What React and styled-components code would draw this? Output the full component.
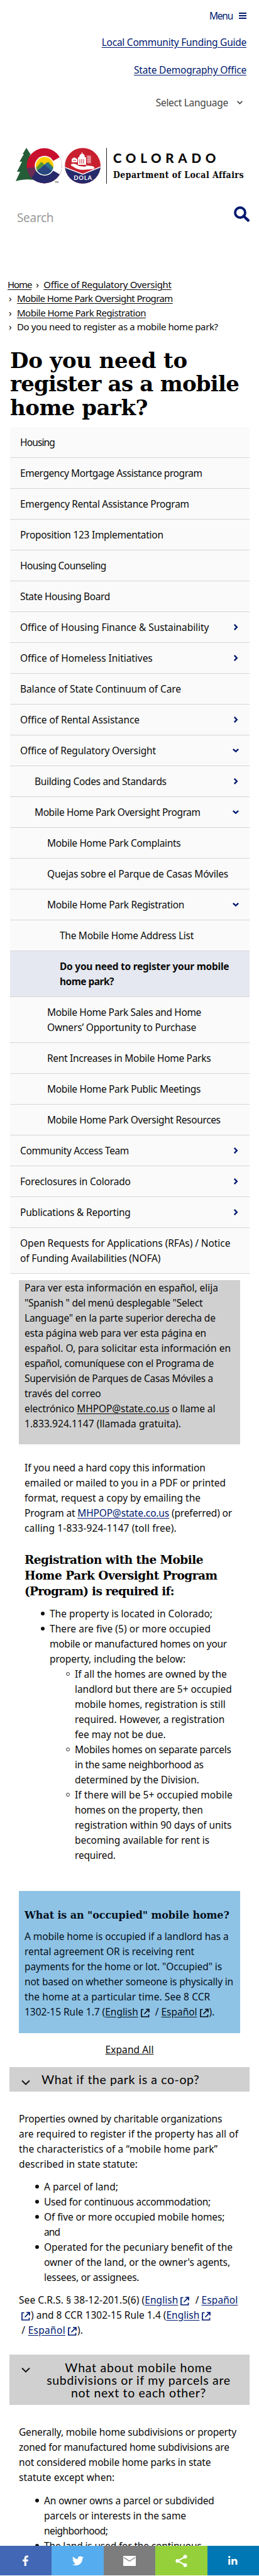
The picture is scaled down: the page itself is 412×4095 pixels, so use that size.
import React, { useLayoutEffect, useRef, useState } from "react";
import styled, { createGlobalStyle, css } from "styled-components";

const SANS = '"Noto Sans", "Open Sans", sans-serif';
const SLAB = '"DejaVu Serif", "Liberation Serif", serif';
const NAVY = "#001970";

const GlobalStyle = createGlobalStyle`
  body {
    margin: 0;
    background: #fff;
    color: #0a0a0a;
    font-family: ${SANS};
    font-size: 15.5px;
    line-height: 24px;
  }
  h1, h2, h3, p, ul { margin: 0; padding: 0; }
  a { color: inherit; }
`;

/* ---------- text fitting ---------- */

const Fitted = styled.span`
  display: inline-block;
  vertical-align: top;
  white-space: pre;
`;

/* Tracks a run of text so that it sets to the given measure. */
function Fit({ w, children }) {
  const ref = useRef(null);
  const [spacing, setSpacing] = useState(0);
  useLayoutEffect(() => {
    const el = ref.current;
    setSpacing((w - el.getBoundingClientRect().width) / el.textContent.length);
  }, [w]);
  return (
    <Fitted ref={ref} style={{ letterSpacing: `${spacing}px` }}>
      {children}
    </Fitted>
  );
}

const LineBox = styled.span`
  display: block;
`;

function Lines({ of }) {
  return of.map(([content, w], i) => (
    <LineBox key={i}>
      <Fit w={w}>{content}</Fit>
    </LineBox>
  ));
}

/* ---------- page and header ---------- */

const Page = styled.div`
  position: relative;
  width: 412px;
  height: 4095px;
  overflow: hidden;
`;

const TopMenu = styled.div`
  display: flex;
  flex-direction: column;
  align-items: flex-end;
  padding: 13px 20px 0 0;
  color: ${NAVY};
`;

const MenuButton = styled.div`
  display: flex;
  gap: 10px;
  margin-bottom: 18px;
`;

const Bars = styled.span`
  width: 12px;
  height: 6px;
  margin-top: 7px;
  border-top: 2px solid ${NAVY};
  border-bottom: 2px solid ${NAVY};
  background: linear-gradient(${NAVY}, ${NAVY}) center / 100% 2px no-repeat;
`;

const TopLink = styled.a`
  text-decoration: underline;
  text-underline-offset: 2px;
  margin-bottom: ${(p) => p.$after}px;
`;

const LanguageSelect = styled.div`
  display: flex;
  align-items: center;
  gap: 14px;
  padding-right: 6px;
  color: #444;
`;

const Brand = styled.div`
  display: flex;
  height: 57px;
  margin: 60px 0 0 25px;
`;

const BrandText = styled.div`
  display: flex;
  flex-direction: column;
  margin-left: 9px;
  padding-left: 10px;
  border-left: 1px solid #222;
`;

const StateName = styled.div`
  height: 28px;
  padding-top: 4px;
  font: 900 20.5px/25px Lato, sans-serif;
`;

const Department = styled.div`
  font: bold 14px/24px ${SLAB};
  font-stretch: condensed;
  margin-top: -1px;
`;

const SearchBar = styled.div`
  display: flex;
  justify-content: space-between;
  align-items: flex-start;
  height: 31px;
  margin: 36px 15px 0 27px;
`;

const Placeholder = styled.div`
  padding-top: 5px;
  font-size: 19px;
  line-height: 26px;
  color: #999;
`;

/* ---------- breadcrumb and title ---------- */

const Breadcrumb = styled.div`
  margin: 82px 0 0 12px;
  font-size: 15px;
  line-height: 22.4px;
`;

const Crumb = styled.div`
  display: flex;
  height: 22.4px;
  text-underline-offset: 2px;
`;

const Sep = styled.span`
  width: ${(p) => (p.$wide ? 19 : 15)}px;
  padding-left: ${(p) => (p.$wide ? 7 : 2)}px;
  box-sizing: border-box;
`;

const Title = styled.h1`
  margin: 24px 0 0 16px;
  font: bold 34px/37.5px ${SLAB};
  color: #000;
`;

/* ---------- side navigation ---------- */

const Nav = styled.nav`
  margin: 12px 15px 0 16px;
`;

const NavRow = styled.div`
  display: flex;
  justify-content: space-between;
  align-items: center;
  padding: 12px 17px 12px ${(p) => [16, 39, 59, 79][p.$level]}px;
  border-bottom: 1px solid #d6d6d6;
  background: #fafafa;
  ${(p) =>
    p.$active &&
    css`
      background: #e5e8f0;
      font-weight: bold;
    `}
`;

/* ---------- article ---------- */

const Panel = styled.div`
  width: 352px;
  box-sizing: border-box;
  margin: ${(p) => p.$top}px 0 0 30px;
  padding: ${(p) => p.$pad};
  background: ${(p) => p.$fill};
  color: ${(p) => p.$ink || "#0a0a0a"};
`;

const Paragraph = styled.p`
  margin: ${(p) => p.$top}px 0 0 ${(p) => p.$left}px;
`;

const SectionTitle = styled.h2`
  margin: 26px 0 11px 39px;
  font: bold 18.5px/25px ${SLAB};
  color: #000;
`;

const PanelTitle = styled.h3`
  margin-bottom: 10px;
  font: bold 16px/22px ${SLAB};
`;

const List = styled.ul`
  margin: ${(p) => p.$top || 0}px 0 0 ${(p) => p.$left}px;
  list-style: none;
`;

const Item = styled.li`
  &::before {
    content: "";
    float: left;
    box-sizing: border-box;
    width: 6px;
    height: 6px;
    margin: 9px 0 0 -14px;
    border-radius: 50%;
    ${(p) =>
      p.$hollow
        ? css`border: 1px solid #333;`
        : css`background: #111;`}
  }
`;

const TextLink = styled.a`
  color: ${(p) => (p.$plain ? "inherit" : NAVY)};
  text-decoration: underline;
  text-underline-offset: 2px;
`;

const ExpandAll = styled.div`
  margin-top: 14px;
  text-align: center;
`;

const AccordionHeader = styled.div`
  display: flex;
  box-sizing: border-box;
  height: ${(p) => p.$h}px;
  margin: ${(p) => p.$top}px 15px 0;
  padding: ${(p) => p.$padTop}px 22px 0 19px;
  background: #d0d0d0;
  color: #111;
`;

const AccordionChevron = styled.span`
  width: 32px;
  padding-top: ${(p) => p.$drop}px;
  line-height: 0;
`;

const AccordionTitle = styled.h3`
  flex: ${(p) => (p.$center ? "1" : "none")};
  text-align: ${(p) => (p.$center ? "center" : "left")};
  font: 400 19.5px/20px Lato, sans-serif;
  color: #000;
`;

const IconTint = styled.span`
  color: ${(p) => (p.$plain ? "inherit" : NAVY)};
`;

const ExternalSvg = styled.svg`
  width: 14px;
  height: 14px;
  margin: 0 1px 0 4px;
  vertical-align: -3px;
`;

/* ---------- share bar ---------- */

const ShareBar = styled.div`
  position: absolute;
  left: 0;
  bottom: 1px;
  display: flex;
  width: 100%;
  height: 47px;
`;

const ShareButton = styled.div`
  flex: 1;
  display: flex;
  align-items: center;
  justify-content: center;
  background: ${(p) => p.$fill};
`;

/* ---------- icons ---------- */

const External = ({ plain }) => (
  <IconTint $plain={plain}>
    <ExternalSvg viewBox="0 0 14 14" fill="none" stroke="currentColor" strokeWidth="1.7">
      <path d="M4.5 1.5H1v11.5h11.5V9.5M8 1h5v5M12.8 1.2L5.5 8.5" />
    </ExternalSvg>
  </IconTint>
);

const Chevron = ({ down }) => (
  <svg width="10" height="10" viewBox="0 0 10 10" fill="none" stroke={NAVY} strokeWidth="2.4">
    <path d={down ? "M0.8 2.8L5 6.6L9.2 2.8" : "M2.8 0.8L6.8 5L2.8 9.2"} />
  </svg>
);

const ThinChevron = ({ w, stroke, sw }) => (
  <svg width={w} height={w * 0.64} viewBox="0 0 14 9" fill="none" stroke={stroke} strokeWidth={sw}>
    <path d="M1 1.5L7 7.5L13 1.5" />
  </svg>
);

const SearchIcon = () => (
  <svg width="25" height="25" viewBox="0 0 25 25" fill="none" stroke={NAVY}>
    <circle cx="10" cy="10" r="8" strokeWidth="3.8" />
    <path d="M15.5 15.5L22.8 22.4" strokeWidth="4.2" strokeLinecap="round" />
  </svg>
);

const Logo = () => (
  <svg width="135" height="57" viewBox="0 0 135 57">
    <path d="M17 0L24 11L22 12L28 22L26 23L34 36L34 53C24 49 12 50 0 53L7 38L2 38L10 22L6 22L13 10L11 10Z" fill="#245d38" />
    <clipPath id="c"><circle cx="45.5" cy="28.5" r="28" /></clipPath>
    <g clipPath="url(#c)">
      <rect x="17" width="58" height="57" fill="#c8102e" />
      <path d="M17 45L45 28.5L75 28.5V57H17Z" fill="#262a6b" />
      <path d="M17 32L37 30L24 50H17Z" fill="#6a2c55" />
      <path d="M46 28.5L75 12V45Z" fill="#fff" />
    </g>
    <circle cx="46" cy="28.5" r="15.7" fill="#fff" />
    <clipPath id="m"><circle cx="46" cy="28.5" r="14" /></clipPath>
    <g clipPath="url(#m)">
      <rect x="31" y="13" width="30" height="31" fill="#ffcd00" />
      <path d="M31 33L41 22L47 28L52 22L62 33V44H31Z" fill="#5b9a32" />
      <path d="M38 33L50 23L62 35V44H31L35 34Z" fill="#2d6f96" />
      <path d="M30 41L46 27L62 41V46H30Z" fill="#28467f" />
    </g>
    <text x="62" y="56" fontSize="4" fontFamily="Lato, sans-serif">TM</text>
    <clipPath id="d"><circle cx="106.6" cy="28.5" r="28.3" /></clipPath>
    <g clipPath="url(#d)">
      <rect x="78" width="58" height="57" fill="#c8202f" />
      <path d="M78 31L106.6 42L136 30V57H78Z" fill="#262a6b" />
      <path d="M78 31L106.6 42L136 30" fill="none" stroke="#fff" strokeWidth="1.6" />
    </g>
    <path d="M88 26C94 24 97 27 101 29L111 30L112 28L122 29C127 31 126 34 121 34L106 35C98 35 93 31 88 28Z" fill="#fff" />
    <path d="M89 23V18L93 15L98 18V23ZM99 27V15H101C101 11 104 10 105 9V7H106V9C109 10 110 12 110 15H112V27Z" fill="#fff" />
    <path d="M102 18V25M105 18V25M108 18V25M91 20H96" stroke="#c8202f" strokeWidth="1" />
    <path d="M112.5 13H119V25M113 16H119M113 19H119M113 22H119M115 13V25M117 13V25" stroke="#fff" strokeWidth="0.7" fill="none" />
    <text x="107" y="51" fontSize="9.5" fontWeight="bold" textAnchor="middle" letterSpacing="0.8" fill="#fff" fontFamily="Lato, sans-serif">DOLA</text>
  </svg>
);

const FacebookIcon = () => (
  <svg width="20" height="20" viewBox="0 0 20 20" fill="#fff">
    <path d="M7.7 18V10.8H5V7.8H7.7V6C7.7 3 9.2 1.5 11.8 1.5H14V4.6H12.3C11.2 4.6 10.9 5 10.9 6V7.8H14L13.6 10.8H10.9V18Z" />
  </svg>
);

const TwitterIcon = () => (
  <svg width="18" height="18" viewBox="0 0 24 24" fill="#fff">
    <path d="M23.95 4.57a10 10 0 0 1-2.82.77 4.96 4.96 0 0 0 2.16-2.72c-.95.55-2 .95-3.13 1.18a4.92 4.92 0 0 0-8.38 4.48C7.69 8.1 4.07 6.13 1.64 3.16a4.92 4.92 0 0 0 1.52 6.57 4.9 4.9 0 0 1-2.23-.61v.06a4.92 4.92 0 0 0 3.95 4.83 5 5 0 0 1-2.21.08 4.94 4.94 0 0 0 4.6 3.42A9.87 9.87 0 0 1 0 19.54a13.99 13.99 0 0 0 7.55 2.21c9.05 0 14-7.5 14-13.98 0-.21 0-.42-.02-.63a9.94 9.94 0 0 0 2.46-2.55z" />
  </svg>
);

const MailIcon = () => (
  <svg width="20" height="16" viewBox="0 0 20 16">
    <path d="M0 0H20V16H0Z" fill="#fff" />
    <path d="M1 2.5L10 8.5L19 2.5" fill="none" stroke="#7d7d7d" strokeWidth="1.3" />
  </svg>
);

const ShareIcon = () => (
  <svg width="19" height="20" viewBox="0 0 19 20" fill="#fff">
    <path d="M15.5 3.5L3.5 10L15.5 16.5" fill="none" stroke="#fff" strokeWidth="2" />
    <circle cx="15.5" cy="3.3" r="3" />
    <circle cx="3.3" cy="10" r="3" />
    <circle cx="15.5" cy="16.7" r="3" />
  </svg>
);

const LinkedinIcon = () => (
  <svg width="15" height="15" viewBox="0 0 15 15" fill="#fff">
    <circle cx="1.8" cy="1.8" r="1.7" />
    <path d="M0.3 5H3.3V14H0.3ZM5.3 5H8.2V6.3C9.6 4 14.6 4 14.6 8.8V14H11.6V9.4C11.6 6.4 8.3 6.7 8.3 9.4V14H5.3Z" />
  </svg>
);

/* ---------- content ---------- */

const NAV = [
  [0, null, ["Housing", 55]],
  [0, null, ["Emergency Mortgage Assistance program", 289.7]],
  [0, null, ["Emergency Rental Assistance Program", 268.7]],
  [0, null, ["Proposition 123 Implementation", 227.7]],
  [0, null, ["Housing Counseling", 136.7]],
  [0, null, ["State Housing Board", 143]],
  [0, "right", ["Office of Housing Finance & Sustainability", 300.3]],
  [0, "right", ["Office of Homeless Initiatives", 210.7]],
  [0, null, ["Balance of State Continuum of Care", 256]],
  [0, "right", ["Office of Rental Assistance", 190]],
  [0, "down", ["Office of Regulatory Oversight", 216]],
  [1, "right", ["Building Codes and Standards", 209.7]],
  [1, "down", ["Mobile Home Park Oversight Program", 263.7]],
  [2, null, ["Mobile Home Park Complaints", 212.3]],
  [2, null, ["Quejas sobre el Parque de Casas Móviles", 288]],
  [2, "down", ["Mobile Home Park Registration", 218]],
  [3, null, ["The Mobile Home Address List", 213]],
  [3, "active", ["Do you need to register your mobile", 269.3], ["home park?", 86]],
  [2, null, ["Mobile Home Park Sales and Home", 245], ["Owners’ Opportunity to Purchase", 237]],
  [2, null, ["Rent Increases in Mobile Home Parks", 260.3]],
  [2, null, ["Mobile Home Park Public Meetings", 244]],
  [2, null, ["Mobile Home Park Oversight Resources", 275.7]],
  [0, "right", ["Community Access Team", 173]],
  [0, "right", ["Foreclosures in Colorado", 175.7]],
  [0, "right", ["Publications & Reporting", 175.7]],
  [0, null, ["Open Requests for Applications (RFAs) / Notice", 334.3], ["of Funding Availabilities (NOFA)", 223.3]],
];

const ExternalLink = ({ plain, children }) => (
  <>
    <TextLink $plain={plain}>{children}</TextLink>
    <External plain={plain} />
  </>
);

export default function App() {
  return (
    <Page>
      <GlobalStyle />
      <header>
        <TopMenu>
          <MenuButton><Fit w={37}>Menu</Fit><Bars /></MenuButton>
          <TopLink $after={20}><Fit w={230.3}><u>Local Community Funding Guide</u></Fit></TopLink>
          <TopLink $after={28}><Fit w={179}><u>State Demography Office</u></Fit></TopLink>
          <LanguageSelect>
            <Fit w={115.3}>Select Language</Fit>
            <ThinChevron w={9} stroke="#444" sw={2.6} />
          </LanguageSelect>
        </TopMenu>
        <Brand>
          <Logo />
          <BrandText>
            <StateName><Fit w={170}>COLORADO</Fit></StateName>
            <Department><Fit w={207.7}>Department of Local Affairs</Fit></Department>
          </BrandText>
        </Brand>
        <SearchBar>
          <Placeholder><Fit w={58.3}>Search</Fit></Placeholder>
          <SearchIcon />
        </SearchBar>
      </header>

      <Breadcrumb>
        <Crumb><Fit w={38.3}><u>Home</u></Fit><Sep $wide>›</Sep><Fit w={203.3}><u>Office of Regulatory Oversight</u></Fit></Crumb>
        <Crumb><Sep>›</Sep><Fit w={247.7}><u>Mobile Home Park Oversight Program</u></Fit></Crumb>
        <Crumb><Sep>›</Sep><Fit w={205}><u>Mobile Home Park Registration</u></Fit></Crumb>
        <Crumb><Sep>›</Sep><Fit w={319.7}>Do you need to register as a mobile home park?</Fit></Crumb>
      </Breadcrumb>

      <Title>
        <Lines of={[["Do you need to", 282], ["register as a mobile", 364], ["home park?", 219]]} />
      </Title>

      <Nav>
        {NAV.map(([level, mark, ...lines]) => (
          <NavRow key={lines[0][0]} $level={level} $active={mark === "active"}>
            <div><Lines of={lines} /></div>
            {(mark === "right" || mark === "down") && <Chevron down={mark === "down"} />}
          </NavRow>
        ))}
      </Nav>

      <Panel $top={10} $pad="0 0 21px 9px" $fill="#d0d0d0">
        <Lines
          of={[
            ["Para ver esta información en español, elija", 308],
            ['"Spanish " del menú desplegable "Select', 283.3],
            ['Language" en la parte superior derecha de', 303.7],
            ["esta página web para ver esta página en", 289],
            ["español. O, para solicitar esta información en", 328],
            ["español, comuníquese con el Programa de", 301],
            ["Supervisión de Parques de Casas Móviles a", 300],
            ["través del correo", 121.7],
            [<>electrónico <TextLink $plain>MHPOP@state.co.us</TextLink> o llame al</>, 303.3],
            ["1.833.924.1147 (llamada gratuita).", 249],
          ]}
        />
      </Panel>

      <Paragraph $top={25} $left={39}>
        <Lines
          of={[
            ["If you need a hard copy this information", 287.7],
            ["emailed or mailed to you in a PDF or printed", 320],
            ["format, request a copy by emailing the", 280],
            [<>Program at <TextLink>MHPOP@state.co.us</TextLink> (preferred) or</>, 330],
            ["calling 1-833-924-1147 (toll free).", 241.7],
          ]}
        />
      </Paragraph>

      <SectionTitle>
        <Lines
          of={[
            ["Registration with the Mobile", 284],
            ["Home Park Oversight Program", 306.7],
            ["(Program) is required if:", 238],
          ]}
        />
      </SectionTitle>

      <List $left={79}>
        <Item><Lines of={[["The property is located in Colorado;", 259]]} /></Item>
        <Item>
          <Lines
            of={[
              ["There are five (5) or more occupied", 256],
              ["mobile or manufactured homes on your", 282],
              ["property, including the below:", 216],
            ]}
          />
          <List $left={40}>
            <Item $hollow>
              <Lines
                of={[
                  ["If all the homes are owned by the", 241.7],
                  ["landlord but there are 5+ occupied", 249.7],
                  ["mobile homes, registration is still", 239.7],
                  ["required. However, a registration", 238.3],
                  ["fee may not be due.", 144.7],
                ]}
              />
            </Item>
            <Item $hollow>
              <Lines
                of={[
                  ["Mobiles homes on separate parcels", 248.7],
                  ["in the same neighborhood as", 204.7],
                  ["determined by the Division.", 197.7],
                ]}
              />
            </Item>
            <Item $hollow>
              <Lines
                of={[
                  ["If there will be 5+ occupied mobile", 250.7],
                  ["homes on the property, then", 203.7],
                  ["registration within 90 days of units", 249.3],
                  ["becoming available for rent is", 214],
                  ["required.", 64.7],
                ]}
              />
            </Item>
          </List>
        </Item>
      </List>

      <Panel $top={45} $pad="28px 0 22px 9px" $fill="#8fc3e5" $ink="#04101c">
        <PanelTitle><Fit w={325.7}>What is an "occupied" mobile home?</Fit></PanelTitle>
        <Lines
          of={[
            ["A mobile home is occupied if a landlord has a", 324.7],
            ["rental agreement OR is receiving rent", 270],
            ['payments for the home or lot. "Occupied" is', 314],
            ["not based on whether someone is physically in", 332],
            ["the home at a particular time. See 8 CCR", 295.3],
            [
              <>
                1302-15 Rule 1.7 (<ExternalLink plain>English</ExternalLink>{"  / "}
                <ExternalLink plain>Español</ExternalLink>).
              </>,
              302.3,
            ],
          ]}
        />
      </Panel>

      <ExpandAll><Fit w={77}><u>Expand All</u></Fit></ExpandAll>

      <AccordionHeader $top={16} $h={39} $padTop={10}>
        <AccordionChevron $drop={10}><ThinChevron w={14} stroke="#111" sw={2} /></AccordionChevron>
        <AccordionTitle><Fit w={251.3}>What if the park is a co-op?</Fit></AccordionTitle>
      </AccordionHeader>

      <Paragraph $top={31} $left={30}>
        <Lines
          of={[
            ["Properties owned by charitable organizations", 323.3],
            ["are required to register if the property has all of", 349],
            ["the characteristics of a “mobile home park”", 316.3],
            ["described in state statute:", 189],
          ]}
        />
      </Paragraph>
      <List $top={12} $left={70}>
        <Item><Lines of={[["A parcel of land;", 118]]} /></Item>
        <Item><Lines of={[["Used for continuous accommodation;", 265]]} /></Item>
        <Item><Lines of={[["Of five or more occupied mobile homes;", 287.3], ["and", 25.3]]} /></Item>
        <Item>
          <Lines
            of={[
              ["Operated for the pecuniary benefit of the", 300],
              ["owner of the land, or the owner's agents,", 296],
              ["lessees, or assignees.", 151.3],
            ]}
          />
        </Item>
      </List>
      <Paragraph $top={12} $left={30}>
        <Lines
          of={[
            [<>See C.R.S. § 38-12-201.5(6) (<ExternalLink>English</ExternalLink>{"  / "}<TextLink>Español</TextLink></>, 348.3],
            [<><External />) and 8 CCR 1302-15 Rule 1.4 (<ExternalLink>English</ExternalLink></>, 306.3],
            [<> / <ExternalLink>Español</ExternalLink>).</>, 102.3],
          ]}
        />
      </Paragraph>

      <AccordionHeader $top={27} $h={80} $padTop={11}>
        <AccordionChevron $drop={9}><ThinChevron w={14} stroke="#111" sw={2} /></AccordionChevron>
        <AccordionTitle $center>
          <Lines
            of={[
              ["What about mobile home", 234.3],
              ["subdivisions or if my parcels are", 292.7],
              ["not next to each other?", 215],
            ]}
          />
        </AccordionTitle>
      </AccordionHeader>

      <Paragraph $top={31} $left={30}>
        <Lines
          of={[
            ["Generally, mobile home subdivisions or property", 346],
            ["zoned for manufactured home subdivisions are", 334.7],
            ["not considered mobile home parks in state", 305.3],
            ["statute except when:", 152.3],
          ]}
        />
      </Paragraph>
      <List $top={13} $left={70}>
        <Item>
          <Lines
            of={[
              ["An owner owns a parcel or subdivided", 270.7],
              ["parcels or interests in the same", 226],
              ["neighborhood;", 101.3],
            ]}
          />
        </Item>
        <Item><Lines of={[["The land is used for the continuous", 250.7]]} /></Item>
      </List>

      <ShareBar>
        <ShareButton $fill="#4267b5"><FacebookIcon /></ShareButton>
        <ShareButton $fill="#55acee"><TwitterIcon /></ShareButton>
        <ShareButton $fill="#7d7d7d"><MailIcon /></ShareButton>
        <ShareButton $fill="#95d03a"><ShareIcon /></ShareButton>
        <ShareButton $fill="#0077b5"><LinkedinIcon /></ShareButton>
      </ShareBar>
    </Page>
  );
}
